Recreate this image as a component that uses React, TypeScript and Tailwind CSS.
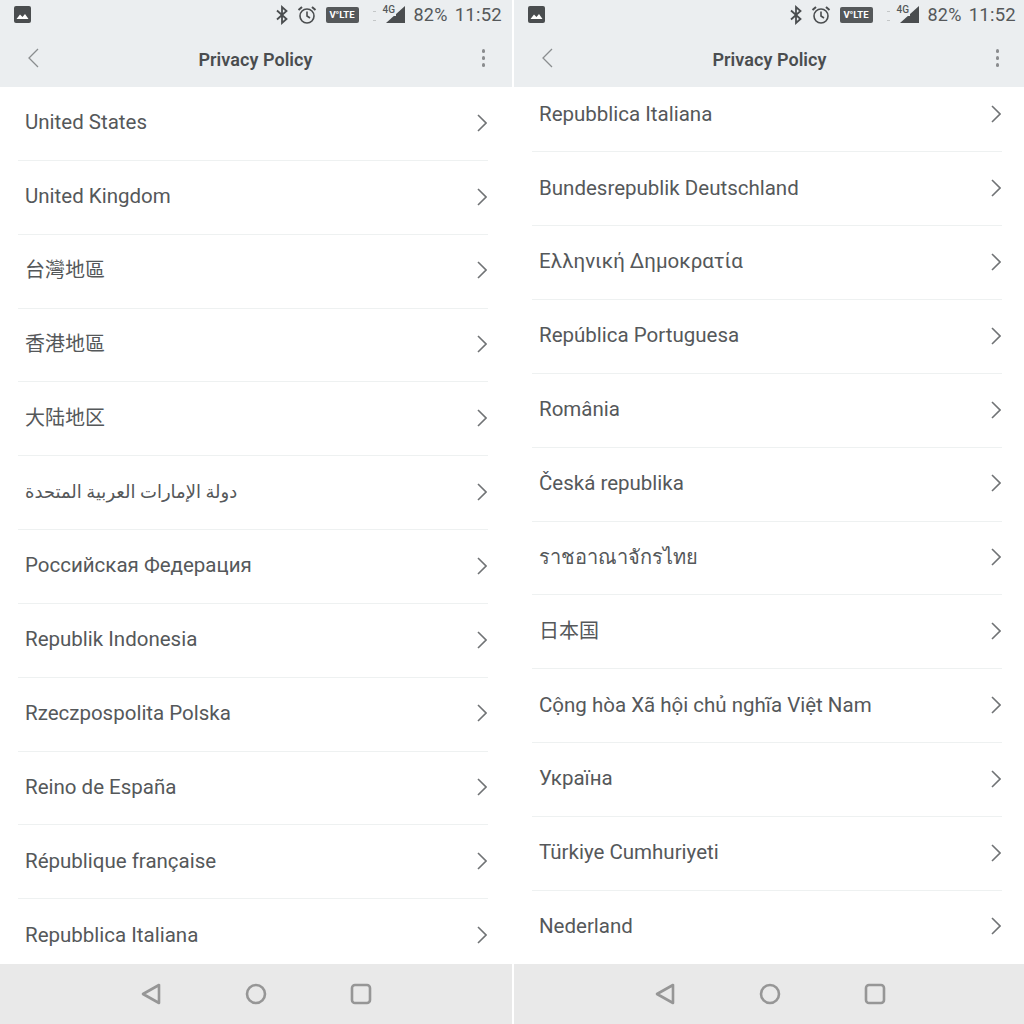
const LEFT = [
  { label: 'United States' },
  { label: 'United Kingdom' },
  { label: '台灣地區', size: 'text-[20px]' },
  { label: '香港地區', size: 'text-[20px]' },
  { label: '大陆地区', size: 'text-[20px]' },
  { label: 'دولة الإمارات العربية المتحدة', size: 'text-[18px]' },
  { label: 'Российская Федерация' },
  { label: 'Republik Indonesia' },
  { label: 'Rzeczpospolita Polska' },
  { label: 'Reino de España' },
  { label: 'République française' },
  { label: 'Repubblica Italiana' },
]

const RIGHT = [
  { label: 'Repubblica Italiana' },
  { label: 'Bundesrepublik Deutschland' },
  { label: 'Ελληνική Δημοκρατία' },
  { label: 'República Portuguesa' },
  { label: 'România' },
  { label: 'Česká republika' },
  { label: 'ราชอาณาจักรไทย', size: 'text-[20px]' },
  { label: '日本国', size: 'text-[20px]' },
  { label: 'Cộng hòa Xã hội chủ nghĩa Việt Nam' },
  { label: 'Україна' },
  { label: 'Türkiye Cumhuriyeti' },
  { label: 'Nederland' },
]

function StatusBar() {
  return (
    <div className="h-[29px] flex items-center pl-[14px] pr-[10px] text-[#55585a]">
      <svg width="17" height="17" viewBox="0 0 17 17">
        <rect width="17" height="17" rx="2" fill="#4a4d4f" />
        <path d="M2.5 13 L6 8.5 L8.5 11 L11 8 L14.5 13 Z" fill="#fff" />
      </svg>
      <div className="ml-auto flex items-center">
        <svg width="14" height="20" viewBox="0 0 14 20" fill="none" stroke="#4a4d4f" strokeWidth="1.8">
          <path d="M2 5.5 L11.5 14 L7 18 V2 L11.5 6 L2 14.5" />
        </svg>
        <svg className="ml-[8px]" width="20" height="20" viewBox="0 0 20 20" fill="none" stroke="#4a4d4f" strokeWidth="1.6">
          <circle cx="10" cy="11" r="7" />
          <path d="M10 6.5 V11 L13 13" />
          <path d="M1.5 5 L5 2 M18.5 5 L15 2" strokeWidth="2" />
        </svg>
        <div className="ml-[9px] w-[33px] h-[16px] rounded-[2px] bg-[#55585a] text-white text-[9.5px] font-bold leading-[16px] text-center font-['Roboto',sans-serif]">
          V°LTE
        </div>
        <div className="ml-[14px] w-[3px] h-[10px] mt-[2px] border-y border-[#c4c7c8]" />
        <div className="relative ml-[7px] w-[22px] h-[20px]">
          <svg className="absolute left-0 top-0" width="22" height="20" viewBox="0 0 22 20">
            <path d="M22 1 V18 H3 Z" fill="#4a4d4f" />
          </svg>
          <span className="absolute -left-[1px] -top-[1px] text-[10px] leading-[12px] font-medium bg-[#ebeef0] px-[1px] font-['Roboto',sans-serif]">
            4G
          </span>
        </div>
        <span className="ml-[9px] text-[18px] leading-[20px] font-['Roboto',sans-serif] tracking-[0.25px]">82%</span>
        <span className="ml-[7px] text-[18.5px] leading-[20px] font-['Roboto',sans-serif] tracking-[0.25px]">11:52</span>
      </div>
    </div>
  )
}

function Row({ label, size, last }: { label: string; size?: string; last: boolean }) {
  return (
    <div className="h-[73.85px] shrink-0 ml-[18px] mr-[24px] flex items-center justify-between pl-[7px] pr-[1px] pb-[2.5px] relative">
      <span className={`${size ?? 'text-[20.5px]'} text-[#55585a] font-['Roboto','Noto_Sans_CJK_TC','DejaVu_Sans',sans-serif]`}>
        {label}
      </span>
      <svg width="10" height="18" viewBox="0 0 10 18" fill="none" stroke="#707375" strokeWidth="1.6">
        <path d="M1 1 L9 9 L1 17" />
      </svg>
      {!last && <div className="absolute left-0 right-0 bottom-0 h-px bg-[#eef1f1]" />}
    </div>
  )
}

function Phone({ items, scroll }: { items: { label: string; size?: string }[]; scroll: boolean }) {
  return (
    <div className="w-[512px] h-[1024px] shrink-0 flex flex-col bg-white">
      <div className="h-[87px] shrink-0 bg-[#ebeef0]">
        <StatusBar />
        <div className="h-[58px] flex items-center relative">
          <svg className="ml-[27px]" width="12" height="20" viewBox="0 0 12 20" fill="none" stroke="#8a8d8f" strokeWidth="1.3">
            <path d="M11 1 L2 10 L11 19" />
          </svg>
          <div className="absolute left-0 w-[511px] pt-[2px] text-center text-[18px] tracking-[0.05px] font-semibold text-[#4a4d4f] font-['Roboto',sans-serif]">
            Privacy Policy
          </div>
          <div className="ml-auto mr-[27px] flex flex-col gap-[3.5px]">
            <div className="w-[3.5px] h-[3.5px] rounded-full bg-[#8a8c8e]" />
            <div className="w-[3.5px] h-[3.5px] rounded-full bg-[#8a8c8e]" />
            <div className="w-[3.5px] h-[3.5px] rounded-full bg-[#8a8c8e]" />
          </div>
        </div>
      </div>
      <div className="flex-1 min-h-0 overflow-hidden">
        <div className={scroll ? '-mt-[8.5px]' : ''}>
          {items.map((item, i) => (
            <Row key={item.label} label={item.label} size={item.size} last={i === items.length - 1} />
          ))}
        </div>
      </div>
      <div className="h-[60px] shrink-0 bg-[#e9e9e9] flex items-center justify-center gap-[83px]">
        <svg width="22" height="22" viewBox="0 0 22 22" fill="none" stroke="#969696" strokeWidth="2.6" strokeLinejoin="round">
          <path d="M19 2 V20 L3 11 Z" />
        </svg>
        <svg width="22" height="22" viewBox="0 0 22 22" fill="none" stroke="#969696" strokeWidth="2.6">
          <circle cx="11" cy="11" r="9" />
        </svg>
        <svg width="22" height="22" viewBox="0 0 22 22" fill="none" stroke="#969696" strokeWidth="2.6">
          <rect x="2" y="2" width="18" height="18" rx="3" />
        </svg>
      </div>
    </div>
  )
}

export default function App() {
  return (
    <div className="w-[1024px] h-[1024px] flex gap-[2px] overflow-hidden bg-white">
      <Phone items={LEFT} scroll={false} />
      <Phone items={RIGHT} scroll={true} />
    </div>
  )
}
